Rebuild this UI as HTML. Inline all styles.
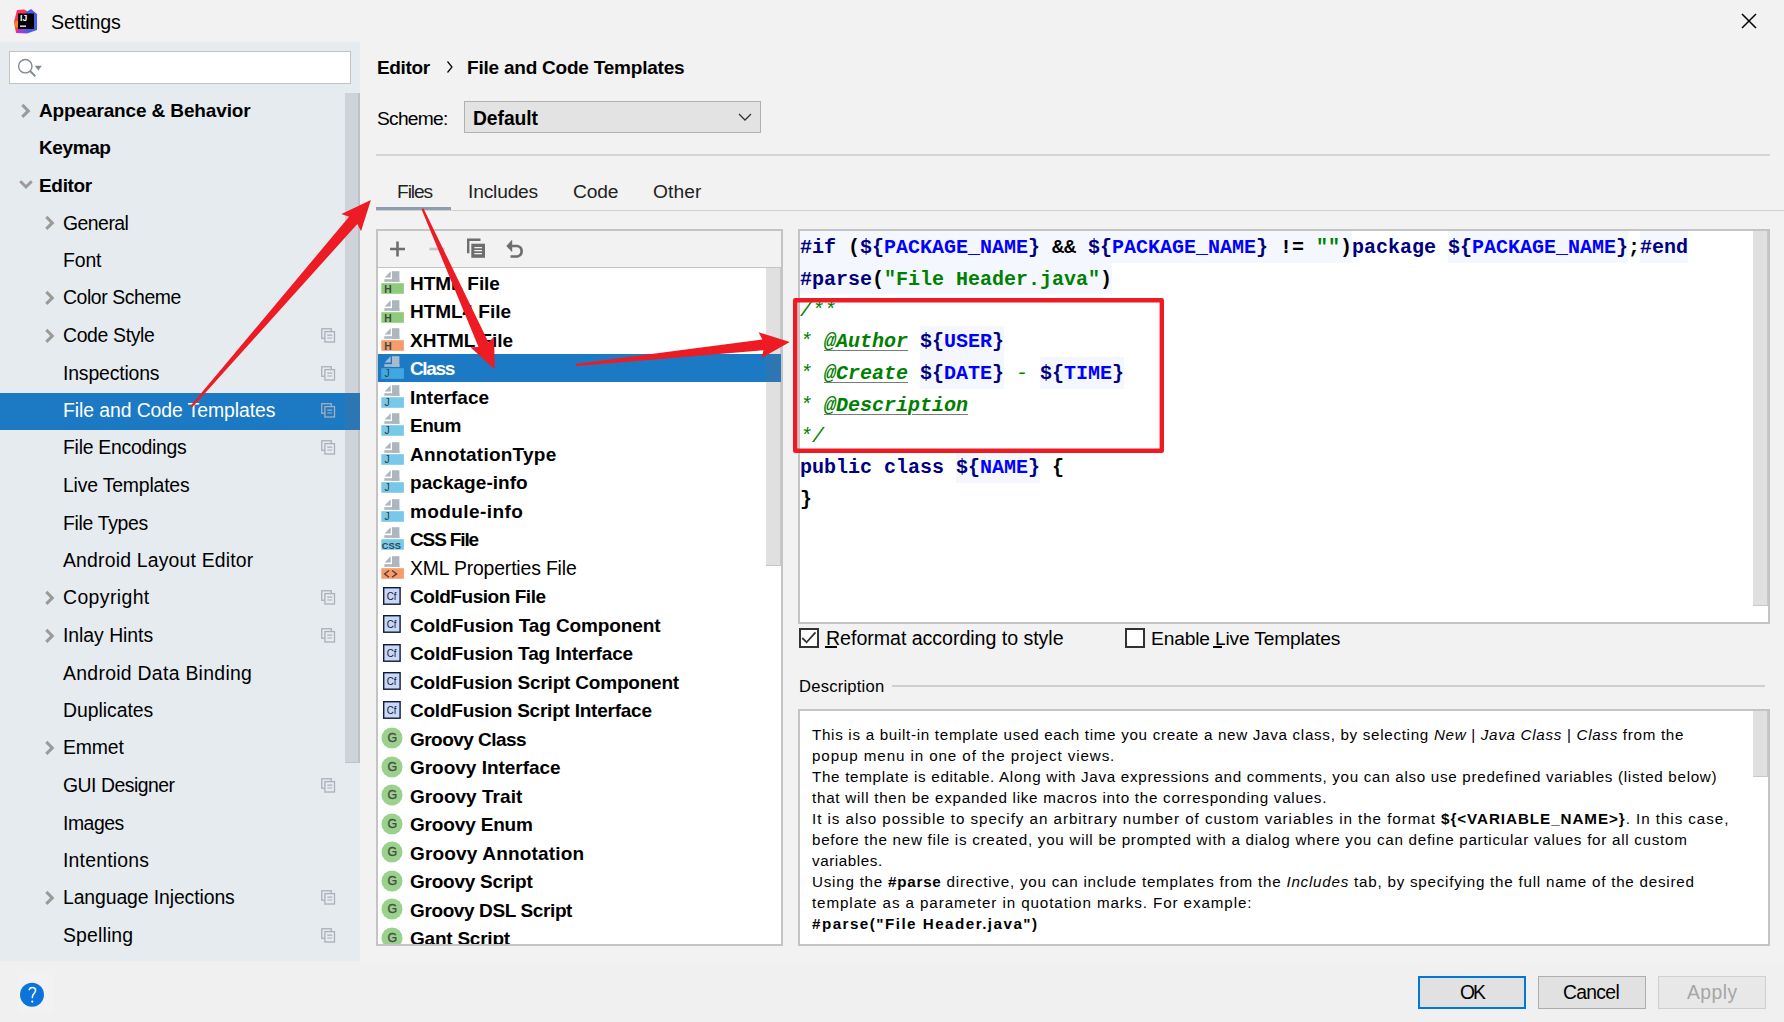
<!DOCTYPE html><html><head><meta charset="utf-8"><style>
*{margin:0;padding:0;box-sizing:border-box}
html,body{width:1784px;height:1022px;overflow:hidden;background:#F2F2F2;font-family:"Liberation Sans",sans-serif;color:#000}
.a{position:absolute;white-space:pre}
</style></head><body>
<svg class="a" style="left:14px;top:9px" width="24" height="25" viewBox="0 0 24 25">
<polygon points="3,1 10,0.5 15,3 9,21 2,24 0,13" fill="#FE3159"/>
<polygon points="0,13 5,11 7,17 2,19" fill="#FC801D"/>
<polygon points="17,0 23,5 23,21 13,24.5 6,19 11,4" fill="#4A5BE8"/>
<polygon points="2,24 7,17 13,24.5" fill="#A03BD8"/>
<rect x="4" y="4.5" width="16" height="15.5" fill="#000"/>
<text x="6" y="12.1" font-family="Liberation Sans" font-weight="bold" font-size="8.6" fill="#fff">IJ</text>
<rect x="6" y="16.5" width="6" height="1.3" fill="#fff"/>
</svg>
<div class="a" id="k1" style="left:51px;top:11.05px;font-size:19.6px;line-height:23.52px;;letter-spacing:-0.129px">Settings</div>
<svg class="a" style="left:1740px;top:12px" width="18" height="18" viewBox="0 0 18 18"><path d="M2 2L16 16M16 2L2 16" stroke="#000" stroke-width="1.5"/></svg>
<div class="a" style="left:0;top:961px;width:1784px;height:61px;background:#F0F0F0"></div>
<div class="a" style="left:0;top:42px;width:360px;height:919px;background:#E6EBF0"></div>
<div class="a" style="left:9px;top:51px;width:342px;height:33px;background:#fff;border:1.5px solid #C2C2C2"></div>
<svg class="a" style="left:16px;top:58px" width="30" height="20" viewBox="0 0 30 20">
<circle cx="9.3" cy="8.2" r="6.7" fill="none" stroke="#7F8B91" stroke-width="1.4"/>
<path d="M14 13L19.3 18.2" stroke="#7F8B91" stroke-width="1.9"/>
<path d="M18.8 7.8L25.8 7.8L22.3 12.6Z" fill="#7F8B91"/>
</svg>
<div class="a" style="left:345px;top:93px;width:15px;height:669.5px;background:#CED3D9;border-right:2.3px solid #BDC2C8;border-bottom:1.8px solid #BDC2C8"></div>
<div class="a" id="k2" style="left:39px;top:99.62px;font-size:19px;line-height:22.80px;font-weight:bold;color:#000;letter-spacing:-0.135px">Appearance &amp; Behavior</div>
<svg class="a" style="left:19.5px;top:102.5px" width="12" height="16" viewBox="0 0 12 16"><path d="M2.3 1.9L8.3 7.9L2.3 13.9" fill="none" stroke="#9A9A9A" stroke-width="3"/></svg>
<div class="a" id="k3" style="left:39px;top:136.62px;font-size:19px;line-height:22.80px;font-weight:bold;color:#000;letter-spacing:-0.396px">Keymap</div>
<div class="a" id="k4" style="left:39px;top:174.62px;font-size:19px;line-height:22.80px;font-weight:bold;color:#000;letter-spacing:-0.324px">Editor</div>
<svg class="a" style="left:18px;top:179.0px" width="16" height="12" viewBox="0 0 16 12"><path d="M2.3 2.3L8 8L13.7 2.3" fill="none" stroke="#9A9A9A" stroke-width="3"/></svg>
<div class="a" id="k5" style="left:63px;top:212.24px;font-size:19.4px;line-height:23.28px;color:#000;letter-spacing:-0.510px">General</div>
<svg class="a" style="left:43.5px;top:215.0px" width="12" height="16" viewBox="0 0 12 16"><path d="M2.3 1.9L8.3 7.9L2.3 13.9" fill="none" stroke="#9A9A9A" stroke-width="3"/></svg>
<div class="a" id="k6" style="left:63px;top:249.24px;font-size:19.4px;line-height:23.28px;color:#000;letter-spacing:-0.120px">Font</div>
<div class="a" id="k7" style="left:63px;top:286.24px;font-size:19.4px;line-height:23.28px;color:#000;letter-spacing:-0.409px">Color Scheme</div>
<svg class="a" style="left:43.5px;top:290.0px" width="12" height="16" viewBox="0 0 12 16"><path d="M2.3 1.9L8.3 7.9L2.3 13.9" fill="none" stroke="#9A9A9A" stroke-width="3"/></svg>
<div class="a" id="k8" style="left:63px;top:324.24px;font-size:19.4px;line-height:23.28px;color:#000;letter-spacing:-0.340px">Code Style</div>
<svg class="a" style="left:43.5px;top:327.5px" width="12" height="16" viewBox="0 0 12 16"><path d="M2.3 1.9L8.3 7.9L2.3 13.9" fill="none" stroke="#9A9A9A" stroke-width="3"/></svg>
<svg class="a" style="left:320.5px;top:328px" width="15" height="15" viewBox="0 0 15 15"><rect x="0.75" y="0.75" width="9.5" height="9.5" fill="none" stroke="#A8B0B8" stroke-width="1.3"/><rect x="3.9" y="3.6" width="9.6" height="10.4" fill="#E6EBF0" stroke="#A8B0B8" stroke-width="1.3"/><path d="M6.3 7.1H11.2M6.3 10H11.2" stroke="#A8B0B8" stroke-width="1.2"/></svg>
<div class="a" id="k9" style="left:63px;top:362.24px;font-size:19.4px;line-height:23.28px;color:#000;letter-spacing:-0.162px">Inspections</div>
<svg class="a" style="left:320.5px;top:366px" width="15" height="15" viewBox="0 0 15 15"><rect x="0.75" y="0.75" width="9.5" height="9.5" fill="none" stroke="#A8B0B8" stroke-width="1.3"/><rect x="3.9" y="3.6" width="9.6" height="10.4" fill="#E6EBF0" stroke="#A8B0B8" stroke-width="1.3"/><path d="M6.3 7.1H11.2M6.3 10H11.2" stroke="#A8B0B8" stroke-width="1.2"/></svg>
<div class="a" style="left:0;top:393px;width:345px;height:37px;background:#1C79C3"></div>
<div class="a" style="left:345px;top:393px;width:15px;height:37px;background:#2C76B4"></div>
<div class="a" id="k10" style="left:63px;top:399.24px;font-size:19.4px;line-height:23.28px;color:#fff;letter-spacing:-0.082px">File and Code Templates</div>
<svg class="a" style="left:320.5px;top:403px" width="15" height="15" viewBox="0 0 15 15"><rect x="0.75" y="0.75" width="9.5" height="9.5" fill="none" stroke="#A8B0B8" stroke-width="1.3"/><rect x="3.9" y="3.6" width="9.6" height="10.4" fill="#1C79C3" stroke="#A8B0B8" stroke-width="1.3"/><path d="M6.3 7.1H11.2M6.3 10H11.2" stroke="#A8B0B8" stroke-width="1.2"/></svg>
<div class="a" id="k11" style="left:63px;top:436.24px;font-size:19.4px;line-height:23.28px;color:#000;letter-spacing:-0.263px">File Encodings</div>
<svg class="a" style="left:320.5px;top:440px" width="15" height="15" viewBox="0 0 15 15"><rect x="0.75" y="0.75" width="9.5" height="9.5" fill="none" stroke="#A8B0B8" stroke-width="1.3"/><rect x="3.9" y="3.6" width="9.6" height="10.4" fill="#E6EBF0" stroke="#A8B0B8" stroke-width="1.3"/><path d="M6.3 7.1H11.2M6.3 10H11.2" stroke="#A8B0B8" stroke-width="1.2"/></svg>
<div class="a" id="k12" style="left:63px;top:474.24px;font-size:19.4px;line-height:23.28px;color:#000;letter-spacing:-0.180px">Live Templates</div>
<div class="a" id="k13" style="left:63px;top:512.24px;font-size:19.4px;line-height:23.28px;color:#000;letter-spacing:-0.320px">File Types</div>
<div class="a" id="k14" style="left:63px;top:549.24px;font-size:19.4px;line-height:23.28px;color:#000;letter-spacing:0.189px">Android Layout Editor</div>
<div class="a" id="k15" style="left:63px;top:586.24px;font-size:19.4px;line-height:23.28px;color:#000;letter-spacing:0.405px">Copyright</div>
<svg class="a" style="left:43.5px;top:590.0px" width="12" height="16" viewBox="0 0 12 16"><path d="M2.3 1.9L8.3 7.9L2.3 13.9" fill="none" stroke="#9A9A9A" stroke-width="3"/></svg>
<svg class="a" style="left:320.5px;top:590px" width="15" height="15" viewBox="0 0 15 15"><rect x="0.75" y="0.75" width="9.5" height="9.5" fill="none" stroke="#A8B0B8" stroke-width="1.3"/><rect x="3.9" y="3.6" width="9.6" height="10.4" fill="#E6EBF0" stroke="#A8B0B8" stroke-width="1.3"/><path d="M6.3 7.1H11.2M6.3 10H11.2" stroke="#A8B0B8" stroke-width="1.2"/></svg>
<div class="a" id="k16" style="left:63px;top:624.24px;font-size:19.4px;line-height:23.28px;color:#000;letter-spacing:-0.036px">Inlay Hints</div>
<svg class="a" style="left:43.5px;top:627.5px" width="12" height="16" viewBox="0 0 12 16"><path d="M2.3 1.9L8.3 7.9L2.3 13.9" fill="none" stroke="#9A9A9A" stroke-width="3"/></svg>
<svg class="a" style="left:320.5px;top:628px" width="15" height="15" viewBox="0 0 15 15"><rect x="0.75" y="0.75" width="9.5" height="9.5" fill="none" stroke="#A8B0B8" stroke-width="1.3"/><rect x="3.9" y="3.6" width="9.6" height="10.4" fill="#E6EBF0" stroke="#A8B0B8" stroke-width="1.3"/><path d="M6.3 7.1H11.2M6.3 10H11.2" stroke="#A8B0B8" stroke-width="1.2"/></svg>
<div class="a" id="k17" style="left:63px;top:662.24px;font-size:19.4px;line-height:23.28px;color:#000;letter-spacing:0.294px">Android Data Binding</div>
<div class="a" id="k18" style="left:63px;top:699.24px;font-size:19.4px;line-height:23.28px;color:#000;letter-spacing:-0.040px">Duplicates</div>
<div class="a" id="k19" style="left:63px;top:736.24px;font-size:19.4px;line-height:23.28px;color:#000;letter-spacing:-0.135px">Emmet</div>
<svg class="a" style="left:43.5px;top:740.0px" width="12" height="16" viewBox="0 0 12 16"><path d="M2.3 1.9L8.3 7.9L2.3 13.9" fill="none" stroke="#9A9A9A" stroke-width="3"/></svg>
<div class="a" id="k20" style="left:63px;top:774.24px;font-size:19.4px;line-height:23.28px;color:#000;letter-spacing:-0.491px">GUI Designer</div>
<svg class="a" style="left:320.5px;top:778px" width="15" height="15" viewBox="0 0 15 15"><rect x="0.75" y="0.75" width="9.5" height="9.5" fill="none" stroke="#A8B0B8" stroke-width="1.3"/><rect x="3.9" y="3.6" width="9.6" height="10.4" fill="#E6EBF0" stroke="#A8B0B8" stroke-width="1.3"/><path d="M6.3 7.1H11.2M6.3 10H11.2" stroke="#A8B0B8" stroke-width="1.2"/></svg>
<div class="a" id="k21" style="left:63px;top:812.24px;font-size:19.4px;line-height:23.28px;color:#000;letter-spacing:-0.468px">Images</div>
<div class="a" id="k22" style="left:63px;top:849.24px;font-size:19.4px;line-height:23.28px;color:#000;letter-spacing:0.200px">Intentions</div>
<div class="a" id="k23" style="left:63px;top:886.24px;font-size:19.4px;line-height:23.28px;color:#000;letter-spacing:-0.100px">Language Injections</div>
<svg class="a" style="left:43.5px;top:890.0px" width="12" height="16" viewBox="0 0 12 16"><path d="M2.3 1.9L8.3 7.9L2.3 13.9" fill="none" stroke="#9A9A9A" stroke-width="3"/></svg>
<svg class="a" style="left:320.5px;top:890px" width="15" height="15" viewBox="0 0 15 15"><rect x="0.75" y="0.75" width="9.5" height="9.5" fill="none" stroke="#A8B0B8" stroke-width="1.3"/><rect x="3.9" y="3.6" width="9.6" height="10.4" fill="#E6EBF0" stroke="#A8B0B8" stroke-width="1.3"/><path d="M6.3 7.1H11.2M6.3 10H11.2" stroke="#A8B0B8" stroke-width="1.2"/></svg>
<div class="a" id="k24" style="left:63px;top:924.24px;font-size:19.4px;line-height:23.28px;color:#000;letter-spacing:0.154px">Spelling</div>
<svg class="a" style="left:320.5px;top:928px" width="15" height="15" viewBox="0 0 15 15"><rect x="0.75" y="0.75" width="9.5" height="9.5" fill="none" stroke="#A8B0B8" stroke-width="1.3"/><rect x="3.9" y="3.6" width="9.6" height="10.4" fill="#E6EBF0" stroke="#A8B0B8" stroke-width="1.3"/><path d="M6.3 7.1H11.2M6.3 10H11.2" stroke="#A8B0B8" stroke-width="1.2"/></svg>
<div class="a" id="k25" style="left:377px;top:56.62px;font-size:19px;line-height:22.80px;font-weight:bold;letter-spacing:-0.360px">Editor</div>
<svg class="a" style="left:446px;top:60px" width="8" height="14" viewBox="0 0 8 14"><path d="M1.5 1.5L6 7L1.5 12.5" fill="none" stroke="#000" stroke-width="1.2"/></svg>
<div class="a" id="k26" style="left:467px;top:56.62px;font-size:19px;line-height:22.80px;font-weight:bold;letter-spacing:-0.221px">File and Code Templates</div>
<div class="a" id="k27" style="left:377px;top:107.43px;font-size:19.2px;line-height:23.04px;;letter-spacing:-0.750px">Scheme:</div>
<div class="a" style="left:463.5px;top:100.8px;width:297px;height:32.2px;background:#E3E3E3;border:1.5px solid #B0B0B0"></div>
<div class="a" id="k28" style="left:473px;top:107.33px;font-size:19.3px;line-height:23.16px;font-weight:bold;letter-spacing:-0.060px">Default</div>
<svg class="a" style="left:737px;top:111px" width="16" height="12" viewBox="0 0 16 12"><path d="M2 3L8 9L14 3" fill="none" stroke="#333" stroke-width="1.3"/></svg>
<div class="a" style="left:376px;top:154px;width:1394px;height:2px;background:#D5D5D5"></div>
<div class="a" id="k29" style="left:397px;top:180.43px;font-size:19.2px;line-height:23.04px;color:#222;letter-spacing:-1.080px">Files</div>
<div class="a" id="k30" style="left:468px;top:180.43px;font-size:19.2px;line-height:23.04px;color:#222;letter-spacing:-0.180px">Includes</div>
<div class="a" id="k31" style="left:573px;top:180.43px;font-size:19.2px;line-height:23.04px;color:#222;letter-spacing:-0.180px">Code</div>
<div class="a" id="k32" style="left:653px;top:180.43px;font-size:19.2px;line-height:23.04px;color:#222;letter-spacing:0.090px">Other</div>
<div class="a" style="left:376px;top:210px;width:1408px;height:1px;background:#D0D0D0"></div>
<div class="a" style="left:376px;top:207px;width:75px;height:3px;background:#8E9CB0"></div>
<div class="a" style="left:376px;top:229px;width:407px;height:717px;border:2px solid #C4C4C4;background:#fff"></div>
<div class="a" style="left:378px;top:231px;width:403px;height:37px;background:#F2F2F2;border-bottom:1.5px solid #C4C4C4"></div>
<svg class="a" style="left:388px;top:238px" width="140" height="22" viewBox="0 0 140 22">
<path d="M2 11H17M9.5 3.5V18.5" stroke="#6E6E6E" stroke-width="2.6"/>
<path d="M41.5 11H56.5" stroke="#C4C4C4" stroke-width="2.6"/>
<path d="M80.2 15.3V1.8H92.5" fill="none" stroke="#6E6E6E" stroke-width="2.4"/>
<rect x="83.3" y="5.7" width="13.7" height="14.1" fill="#6E6E6E"/>
<path d="M86.3 9.6H94M86.3 12.6H94M86.3 15.6H94" stroke="#F2F2F2" stroke-width="1.4"/>
<path d="M123 8H129.5A5.4 5.4 0 0 1 129.5 18.5H122.5" fill="none" stroke="#6E6E6E" stroke-width="2.7"/>
<path d="M118.3 8L124.2 1.5V14.3Z" fill="#6E6E6E"/>
</svg>
<div class="a" style="left:766px;top:268px;width:15px;height:297.5px;background:#E0E0E0;border-right:1.6px solid #C8C8C8;border-bottom:1.6px solid #C8C8C8"></div>
<div class="a" style="left:378px;top:354px;width:388px;height:28px;background:#1C79C3"></div>
<div class="a" style="left:766px;top:354px;width:15px;height:28px;background:#2C76B4"></div>
<div class="a" style="left:378px;top:268px;width:388px;height:676px;overflow:hidden">
<div class="a" id="k33" style="left:32px;top:4.62px;font-size:19px;line-height:22.80px;font-weight:bold;color:#000;letter-spacing:-0.067px">HTML File</div>
<svg class="a" style="left:3px;top:3.0px" width="24" height="24" viewBox="0 0 24 24"><path d="M3.6 6.5L9.7 0.2V6.5Z" fill="#ADB6BE"/><rect x="11" y="0.2" width="7.4" height="10.6" fill="#ADB6BE"/><rect x="3.3" y="8.2" width="15.1" height="2.6" fill="#ADB6BE"/><rect x="0.3" y="12.2" width="22.6" height="10.6" fill="#8FCB7B"/><text x="3.2" y="21.6" font-family="Liberation Sans" font-weight="bold" font-size="10.3" fill="#3A4A3C">H</text></svg>
<div class="a" id="k34" style="left:32px;top:32.62px;font-size:19px;line-height:22.80px;font-weight:bold;color:#000;letter-spacing:-0.040px">HTML4 File</div>
<svg class="a" style="left:3px;top:31.5px" width="24" height="24" viewBox="0 0 24 24"><path d="M3.6 6.5L9.7 0.2V6.5Z" fill="#ADB6BE"/><rect x="11" y="0.2" width="7.4" height="10.6" fill="#ADB6BE"/><rect x="3.3" y="8.2" width="15.1" height="2.6" fill="#ADB6BE"/><rect x="0.3" y="12.2" width="22.6" height="10.6" fill="#8FCB7B"/><text x="3.2" y="21.6" font-family="Liberation Sans" font-weight="bold" font-size="10.3" fill="#3A4A3C">H</text></svg>
<div class="a" id="k35" style="left:32px;top:61.62px;font-size:19px;line-height:22.80px;font-weight:bold;color:#000;letter-spacing:0.000px">XHTML File</div>
<svg class="a" style="left:3px;top:60.0px" width="24" height="24" viewBox="0 0 24 24"><path d="M3.6 6.5L9.7 0.2V6.5Z" fill="#ADB6BE"/><rect x="11" y="0.2" width="7.4" height="10.6" fill="#ADB6BE"/><rect x="3.3" y="8.2" width="15.1" height="2.6" fill="#ADB6BE"/><rect x="0.3" y="12.2" width="22.6" height="10.6" fill="#F59B6C"/><text x="3.2" y="21.6" font-family="Liberation Sans" font-weight="bold" font-size="10.3" fill="#3A4A3C">H</text></svg>
<div class="a" id="k36" style="left:32px;top:89.62px;font-size:19px;line-height:22.80px;font-weight:bold;color:#fff;letter-spacing:-1.350px">Class</div>
<svg class="a" style="left:3px;top:88.4px" width="24" height="24" viewBox="0 0 24 24"><path d="M3.6 6.5L9.7 0.2V6.5Z" fill="#A9BCCE"/><rect x="11" y="0.2" width="7.4" height="10.6" fill="#A9BCCE"/><rect x="3.3" y="8.2" width="15.1" height="2.6" fill="#A9BCCE"/><rect x="0.3" y="12.2" width="22.6" height="10.6" fill="#40A8E0"/><text x="3.4" y="21.4" font-family="Liberation Sans" font-size="10.5" fill="#2F3A40">J</text></svg>
<div class="a" id="k37" style="left:32px;top:118.62px;font-size:19px;line-height:22.80px;font-weight:bold;color:#000;letter-spacing:-0.022px">Interface</div>
<svg class="a" style="left:3px;top:116.9px" width="24" height="24" viewBox="0 0 24 24"><path d="M3.6 6.5L9.7 0.2V6.5Z" fill="#ADB6BE"/><rect x="11" y="0.2" width="7.4" height="10.6" fill="#ADB6BE"/><rect x="3.3" y="8.2" width="15.1" height="2.6" fill="#ADB6BE"/><rect x="0.3" y="12.2" width="22.6" height="10.6" fill="#78C8E8"/><text x="3.4" y="21.4" font-family="Liberation Sans" font-size="10.5" fill="#2F3A40">J</text></svg>
<div class="a" id="k38" style="left:32px;top:146.62px;font-size:19px;line-height:22.80px;font-weight:bold;color:#000;letter-spacing:-0.480px">Enum</div>
<svg class="a" style="left:3px;top:145.4px" width="24" height="24" viewBox="0 0 24 24"><path d="M3.6 6.5L9.7 0.2V6.5Z" fill="#ADB6BE"/><rect x="11" y="0.2" width="7.4" height="10.6" fill="#ADB6BE"/><rect x="3.3" y="8.2" width="15.1" height="2.6" fill="#ADB6BE"/><rect x="0.3" y="12.2" width="22.6" height="10.6" fill="#78C8E8"/><text x="3.4" y="21.4" font-family="Liberation Sans" font-size="10.5" fill="#2F3A40">J</text></svg>
<div class="a" id="k39" style="left:32px;top:175.62px;font-size:19px;line-height:22.80px;font-weight:bold;color:#000;letter-spacing:0.235px">AnnotationType</div>
<svg class="a" style="left:3px;top:173.9px" width="24" height="24" viewBox="0 0 24 24"><path d="M3.6 6.5L9.7 0.2V6.5Z" fill="#ADB6BE"/><rect x="11" y="0.2" width="7.4" height="10.6" fill="#ADB6BE"/><rect x="3.3" y="8.2" width="15.1" height="2.6" fill="#ADB6BE"/><rect x="0.3" y="12.2" width="22.6" height="10.6" fill="#78C8E8"/><text x="3.4" y="21.4" font-family="Liberation Sans" font-size="10.5" fill="#2F3A40">J</text></svg>
<div class="a" id="k40" style="left:32px;top:203.62px;font-size:19px;line-height:22.80px;font-weight:bold;color:#000;letter-spacing:0.049px">package-info</div>
<svg class="a" style="left:3px;top:202.4px" width="24" height="24" viewBox="0 0 24 24"><path d="M3.6 6.5L9.7 0.2V6.5Z" fill="#ADB6BE"/><rect x="11" y="0.2" width="7.4" height="10.6" fill="#ADB6BE"/><rect x="3.3" y="8.2" width="15.1" height="2.6" fill="#ADB6BE"/><rect x="0.3" y="12.2" width="22.6" height="10.6" fill="#78C8E8"/><text x="3.4" y="21.4" font-family="Liberation Sans" font-size="10.5" fill="#2F3A40">J</text></svg>
<div class="a" id="k41" style="left:32px;top:232.62px;font-size:19px;line-height:22.80px;font-weight:bold;color:#000;letter-spacing:0.414px">module-info</div>
<svg class="a" style="left:3px;top:230.8px" width="24" height="24" viewBox="0 0 24 24"><path d="M3.6 6.5L9.7 0.2V6.5Z" fill="#ADB6BE"/><rect x="11" y="0.2" width="7.4" height="10.6" fill="#ADB6BE"/><rect x="3.3" y="8.2" width="15.1" height="2.6" fill="#ADB6BE"/><rect x="0.3" y="12.2" width="22.6" height="10.6" fill="#78C8E8"/><text x="3.4" y="21.4" font-family="Liberation Sans" font-size="10.5" fill="#2F3A40">J</text></svg>
<div class="a" id="k42" style="left:32px;top:260.62px;font-size:19px;line-height:22.80px;font-weight:bold;color:#000;letter-spacing:-1.131px">CSS File</div>
<svg class="a" style="left:3px;top:259.3px" width="24" height="24" viewBox="0 0 24 24"><path d="M3.6 6.5L9.7 0.2V6.5Z" fill="#ADB6BE"/><rect x="11" y="0.2" width="7.4" height="10.6" fill="#ADB6BE"/><rect x="3.3" y="8.2" width="15.1" height="2.6" fill="#ADB6BE"/><rect x="0.3" y="12.2" width="22.6" height="10.6" fill="#78C8E8"/><text x="0.8" y="21.8" font-family="Liberation Sans" font-weight="bold" font-size="9.3" fill="#2D4552">CSS</text></svg>
<div class="a" id="k43" style="left:32px;top:289.24px;font-size:19.4px;line-height:23.28px;color:#000;letter-spacing:-0.160px">XML Properties File</div>
<svg class="a" style="left:3px;top:287.8px" width="24" height="24" viewBox="0 0 24 24"><path d="M3.6 6.5L9.7 0.2V6.5Z" fill="#ADB6BE"/><rect x="11" y="0.2" width="7.4" height="10.6" fill="#ADB6BE"/><rect x="3.3" y="8.2" width="15.1" height="2.6" fill="#ADB6BE"/><rect x="0.3" y="12.2" width="22.6" height="10.6" fill="#F59B6C"/><path d="M8 14.5L3.6 17.9L8 21.3M11.1 14.5L15.6 17.9L11.1 21.3" fill="none" stroke="#5A3A2C" stroke-width="1.35"/></svg>
<div class="a" id="k44" style="left:32px;top:317.62px;font-size:19px;line-height:22.80px;font-weight:bold;color:#000;letter-spacing:-0.463px">ColdFusion File</div>
<svg class="a" style="left:5px;top:318.8px" width="19" height="19" viewBox="0 0 19 19"><rect x="0.7" y="0.7" width="16.4" height="16.5" fill="#C9D8F7" stroke="#0F1A3A" stroke-width="1.4"/><text x="3.7" y="13.4" font-family="Liberation Sans" font-size="11.8" fill="#1A2040" textLength="9.8" lengthAdjust="spacingAndGlyphs">Cf</text></svg>
<div class="a" id="k45" style="left:32px;top:346.62px;font-size:19px;line-height:22.80px;font-weight:bold;color:#000;letter-spacing:-0.102px">ColdFusion Tag Component</div>
<svg class="a" style="left:5px;top:347.3px" width="19" height="19" viewBox="0 0 19 19"><rect x="0.7" y="0.7" width="16.4" height="16.5" fill="#C9D8F7" stroke="#0F1A3A" stroke-width="1.4"/><text x="3.7" y="13.4" font-family="Liberation Sans" font-size="11.8" fill="#1A2040" textLength="9.8" lengthAdjust="spacingAndGlyphs">Cf</text></svg>
<div class="a" id="k46" style="left:32px;top:374.62px;font-size:19px;line-height:22.80px;font-weight:bold;color:#000;letter-spacing:-0.149px">ColdFusion Tag Interface</div>
<svg class="a" style="left:5px;top:375.7px" width="19" height="19" viewBox="0 0 19 19"><rect x="0.7" y="0.7" width="16.4" height="16.5" fill="#C9D8F7" stroke="#0F1A3A" stroke-width="1.4"/><text x="3.7" y="13.4" font-family="Liberation Sans" font-size="11.8" fill="#1A2040" textLength="9.8" lengthAdjust="spacingAndGlyphs">Cf</text></svg>
<div class="a" id="k47" style="left:32px;top:403.62px;font-size:19px;line-height:22.80px;font-weight:bold;color:#000;letter-spacing:-0.201px">ColdFusion Script Component</div>
<svg class="a" style="left:5px;top:404.2px" width="19" height="19" viewBox="0 0 19 19"><rect x="0.7" y="0.7" width="16.4" height="16.5" fill="#C9D8F7" stroke="#0F1A3A" stroke-width="1.4"/><text x="3.7" y="13.4" font-family="Liberation Sans" font-size="11.8" fill="#1A2040" textLength="9.8" lengthAdjust="spacingAndGlyphs">Cf</text></svg>
<div class="a" id="k48" style="left:32px;top:431.62px;font-size:19px;line-height:22.80px;font-weight:bold;color:#000;letter-spacing:-0.235px">ColdFusion Script Interface</div>
<svg class="a" style="left:5px;top:432.7px" width="19" height="19" viewBox="0 0 19 19"><rect x="0.7" y="0.7" width="16.4" height="16.5" fill="#C9D8F7" stroke="#0F1A3A" stroke-width="1.4"/><text x="3.7" y="13.4" font-family="Liberation Sans" font-size="11.8" fill="#1A2040" textLength="9.8" lengthAdjust="spacingAndGlyphs">Cf</text></svg>
<div class="a" id="k49" style="left:32px;top:460.62px;font-size:19px;line-height:22.80px;font-weight:bold;color:#000;letter-spacing:-0.540px">Groovy Class</div>
<svg class="a" style="left:3px;top:459.2px" width="22" height="22" viewBox="0 0 22 22"><circle cx="11" cy="11" r="10.5" fill="#9AD18C"/><text x="6.5" y="15.4" font-family="Liberation Sans" font-size="12.4" fill="#454B45" stroke="#454B45" stroke-width="0.35">G</text></svg>
<div class="a" id="k50" style="left:32px;top:488.62px;font-size:19px;line-height:22.80px;font-weight:bold;color:#000;letter-spacing:-0.024px">Groovy Interface</div>
<svg class="a" style="left:3px;top:487.7px" width="22" height="22" viewBox="0 0 22 22"><circle cx="11" cy="11" r="10.5" fill="#9AD18C"/><text x="6.5" y="15.4" font-family="Liberation Sans" font-size="12.4" fill="#454B45" stroke="#454B45" stroke-width="0.35">G</text></svg>
<div class="a" id="k51" style="left:32px;top:517.62px;font-size:19px;line-height:22.80px;font-weight:bold;color:#000;letter-spacing:0.033px">Groovy Trait</div>
<svg class="a" style="left:3px;top:516.1px" width="22" height="22" viewBox="0 0 22 22"><circle cx="11" cy="11" r="10.5" fill="#9AD18C"/><text x="6.5" y="15.4" font-family="Liberation Sans" font-size="12.4" fill="#454B45" stroke="#454B45" stroke-width="0.35">G</text></svg>
<div class="a" id="k52" style="left:32px;top:545.62px;font-size:19px;line-height:22.80px;font-weight:bold;color:#000;letter-spacing:-0.162px">Groovy Enum</div>
<svg class="a" style="left:3px;top:544.6px" width="22" height="22" viewBox="0 0 22 22"><circle cx="11" cy="11" r="10.5" fill="#9AD18C"/><text x="6.5" y="15.4" font-family="Liberation Sans" font-size="12.4" fill="#454B45" stroke="#454B45" stroke-width="0.35">G</text></svg>
<div class="a" id="k53" style="left:32px;top:574.62px;font-size:19px;line-height:22.80px;font-weight:bold;color:#000;letter-spacing:0.169px">Groovy Annotation</div>
<svg class="a" style="left:3px;top:573.1px" width="22" height="22" viewBox="0 0 22 22"><circle cx="11" cy="11" r="10.5" fill="#9AD18C"/><text x="6.5" y="15.4" font-family="Liberation Sans" font-size="12.4" fill="#454B45" stroke="#454B45" stroke-width="0.35">G</text></svg>
<div class="a" id="k54" style="left:32px;top:602.62px;font-size:19px;line-height:22.80px;font-weight:bold;color:#000;letter-spacing:-0.240px">Groovy Script</div>
<svg class="a" style="left:3px;top:601.6px" width="22" height="22" viewBox="0 0 22 22"><circle cx="11" cy="11" r="10.5" fill="#9AD18C"/><text x="6.5" y="15.4" font-family="Liberation Sans" font-size="12.4" fill="#454B45" stroke="#454B45" stroke-width="0.35">G</text></svg>
<div class="a" id="k55" style="left:32px;top:631.62px;font-size:19px;line-height:22.80px;font-weight:bold;color:#000;letter-spacing:-0.383px">Groovy DSL Script</div>
<svg class="a" style="left:3px;top:630.1px" width="22" height="22" viewBox="0 0 22 22"><circle cx="11" cy="11" r="10.5" fill="#9AD18C"/><text x="6.5" y="15.4" font-family="Liberation Sans" font-size="12.4" fill="#454B45" stroke="#454B45" stroke-width="0.35">G</text></svg>
<div class="a" id="k56" style="left:32px;top:659.62px;font-size:19px;line-height:22.80px;font-weight:bold;color:#000;letter-spacing:-0.230px">Gant Script</div>
<svg class="a" style="left:3px;top:658.5px" width="22" height="22" viewBox="0 0 22 22"><circle cx="11" cy="11" r="10.5" fill="#9AD18C"/><text x="6.5" y="15.4" font-family="Liberation Sans" font-size="12.4" fill="#454B45" stroke="#454B45" stroke-width="0.35">G</text></svg>
</div>
<div class="a" style="left:798px;top:229px;width:972px;height:395px;border:2px solid #C4C4C4;background:#fff"></div>
<div class="a" style="left:1753px;top:231px;width:15px;height:374.5px;background:#E0E0E0;border-right:1.6px solid #C8C8C8;border-bottom:1.6px solid #C8C8C8"></div>
<div class="a" style="left:800.0px;top:231.0px;width:36.0px;height:31.5px;background:#F4F7FD"></div>
<div class="a" style="left:836.0px;top:231.0px;width:24.0px;height:31.5px;background:#F4F7FD"></div>
<div class="a" style="left:860.0px;top:231.0px;width:24.0px;height:31.5px;background:#F4F7FD"></div>
<div class="a" style="left:884.0px;top:231.0px;width:144.0px;height:31.5px;background:#F4F7FD"></div>
<div class="a" style="left:1028.0px;top:231.0px;width:12.0px;height:31.5px;background:#F4F7FD"></div>
<div class="a" style="left:1040.0px;top:231.0px;width:48.0px;height:31.5px;background:#F4F7FD"></div>
<div class="a" style="left:1088.0px;top:231.0px;width:24.0px;height:31.5px;background:#F4F7FD"></div>
<div class="a" style="left:1112.0px;top:231.0px;width:144.0px;height:31.5px;background:#F4F7FD"></div>
<div class="a" style="left:1256.0px;top:231.0px;width:12.0px;height:31.5px;background:#F4F7FD"></div>
<div class="a" style="left:1268.0px;top:231.0px;width:48.0px;height:31.5px;background:#F4F7FD"></div>
<div class="a" style="left:1316.0px;top:231.0px;width:24.0px;height:31.5px;background:#F4F7FD"></div>
<div class="a" style="left:1340.0px;top:231.0px;width:12.0px;height:31.5px;background:#F4F7FD"></div>
<div class="a" style="left:1448.0px;top:231.0px;width:24.0px;height:31.5px;background:#F4F7FD"></div>
<div class="a" style="left:1472.0px;top:231.0px;width:144.0px;height:31.5px;background:#F4F7FD"></div>
<div class="a" style="left:1616.0px;top:231.0px;width:12.0px;height:31.5px;background:#F4F7FD"></div>
<div class="a" style="left:1640.0px;top:231.0px;width:48.0px;height:31.5px;background:#F4F7FD"></div>
<div class="a" style="left:800px;top:235.67px;font-size:20px;line-height:24.00px;font-family:'Liberation Mono',monospace;color:#000080;font-weight:bold;">#if</div>
<div class="a" style="left:836.0px;top:235.67px;font-size:20px;line-height:24.00px;font-family:'Liberation Mono',monospace;color:#000;font-weight:bold;"> (</div>
<div class="a" style="left:860.0px;top:235.67px;font-size:20px;line-height:24.00px;font-family:'Liberation Mono',monospace;color:#000080;font-weight:bold;">${</div>
<div class="a" style="left:884.0px;top:235.67px;font-size:20px;line-height:24.00px;font-family:'Liberation Mono',monospace;color:#0000FF;font-weight:bold;">PACKAGE_NAME</div>
<div class="a" style="left:1028.0px;top:235.67px;font-size:20px;line-height:24.00px;font-family:'Liberation Mono',monospace;color:#000080;font-weight:bold;">}</div>
<div class="a" style="left:1040.0px;top:235.67px;font-size:20px;line-height:24.00px;font-family:'Liberation Mono',monospace;color:#000;font-weight:bold;"> &amp;&amp; </div>
<div class="a" style="left:1088.0px;top:235.67px;font-size:20px;line-height:24.00px;font-family:'Liberation Mono',monospace;color:#000080;font-weight:bold;">${</div>
<div class="a" style="left:1112.0px;top:235.67px;font-size:20px;line-height:24.00px;font-family:'Liberation Mono',monospace;color:#0000FF;font-weight:bold;">PACKAGE_NAME</div>
<div class="a" style="left:1256.0px;top:235.67px;font-size:20px;line-height:24.00px;font-family:'Liberation Mono',monospace;color:#000080;font-weight:bold;">}</div>
<div class="a" style="left:1268.0px;top:235.67px;font-size:20px;line-height:24.00px;font-family:'Liberation Mono',monospace;color:#000;font-weight:bold;"> != </div>
<div class="a" style="left:1316.0px;top:235.67px;font-size:20px;line-height:24.00px;font-family:'Liberation Mono',monospace;color:#008000;font-weight:bold;">&quot;&quot;</div>
<div class="a" style="left:1340.0px;top:235.67px;font-size:20px;line-height:24.00px;font-family:'Liberation Mono',monospace;color:#000;font-weight:bold;">)</div>
<div class="a" style="left:1352.0px;top:235.67px;font-size:20px;line-height:24.00px;font-family:'Liberation Mono',monospace;color:#000080;font-weight:bold;">package </div>
<div class="a" style="left:1448.0px;top:235.67px;font-size:20px;line-height:24.00px;font-family:'Liberation Mono',monospace;color:#000080;font-weight:bold;">${</div>
<div class="a" style="left:1472.0px;top:235.67px;font-size:20px;line-height:24.00px;font-family:'Liberation Mono',monospace;color:#0000FF;font-weight:bold;">PACKAGE_NAME</div>
<div class="a" style="left:1616.0px;top:235.67px;font-size:20px;line-height:24.00px;font-family:'Liberation Mono',monospace;color:#000080;font-weight:bold;">}</div>
<div class="a" style="left:1628.0px;top:235.67px;font-size:20px;line-height:24.00px;font-family:'Liberation Mono',monospace;color:#000;font-weight:bold;">;</div>
<div class="a" style="left:1640.0px;top:235.67px;font-size:20px;line-height:24.00px;font-family:'Liberation Mono',monospace;color:#000080;font-weight:bold;">#end</div>
<div class="a" style="left:800.0px;top:262.5px;width:72.0px;height:31.5px;background:#F4F7FD"></div>
<div class="a" style="left:872.0px;top:262.5px;width:12.0px;height:31.5px;background:#F4F7FD"></div>
<div class="a" style="left:884.0px;top:262.5px;width:216.0px;height:31.5px;background:#F4F7FD"></div>
<div class="a" style="left:1100.0px;top:262.5px;width:12.0px;height:31.5px;background:#F4F7FD"></div>
<div class="a" style="left:800px;top:267.67px;font-size:20px;line-height:24.00px;font-family:'Liberation Mono',monospace;color:#000080;font-weight:bold;">#parse</div>
<div class="a" style="left:872.0px;top:267.67px;font-size:20px;line-height:24.00px;font-family:'Liberation Mono',monospace;color:#000;font-weight:bold;">(</div>
<div class="a" style="left:884.0px;top:267.67px;font-size:20px;line-height:24.00px;font-family:'Liberation Mono',monospace;color:#008000;font-weight:bold;">&quot;File Header.java&quot;</div>
<div class="a" style="left:1100.0px;top:267.67px;font-size:20px;line-height:24.00px;font-family:'Liberation Mono',monospace;color:#000;font-weight:bold;">)</div>
<div class="a" style="left:800px;top:298.67px;font-size:20px;line-height:24.00px;font-family:'Liberation Mono',monospace;color:#008000;font-style:italic;">/**</div>
<div class="a" style="left:920.0px;top:325.5px;width:24.0px;height:31.5px;background:#F4F7FD"></div>
<div class="a" style="left:944.0px;top:325.5px;width:48.0px;height:31.5px;background:#F4F7FD"></div>
<div class="a" style="left:992.0px;top:325.5px;width:12.0px;height:31.5px;background:#F4F7FD"></div>
<div class="a" style="left:800px;top:329.67px;font-size:20px;line-height:24.00px;font-family:'Liberation Mono',monospace;color:#008000;font-style:italic;">* </div>
<div class="a" style="left:824.0px;top:329.67px;font-size:20px;line-height:24.00px;font-family:'Liberation Mono',monospace;color:#008000;font-weight:bold;font-style:italic;text-decoration:underline;text-decoration-color:#7a7a7a;text-decoration-thickness:1px;text-underline-offset:3px;">@Author</div>
<div class="a" style="left:908.0px;top:329.67px;font-size:20px;line-height:24.00px;font-family:'Liberation Mono',monospace;color:#008000;font-style:italic;"> </div>
<div class="a" style="left:920.0px;top:329.67px;font-size:20px;line-height:24.00px;font-family:'Liberation Mono',monospace;color:#000080;font-weight:bold;">${</div>
<div class="a" style="left:944.0px;top:329.67px;font-size:20px;line-height:24.00px;font-family:'Liberation Mono',monospace;color:#0000FF;font-weight:bold;">USER</div>
<div class="a" style="left:992.0px;top:329.67px;font-size:20px;line-height:24.00px;font-family:'Liberation Mono',monospace;color:#000080;font-weight:bold;">}</div>
<div class="a" style="left:920.0px;top:357.0px;width:24.0px;height:31.5px;background:#F4F7FD"></div>
<div class="a" style="left:944.0px;top:357.0px;width:48.0px;height:31.5px;background:#F4F7FD"></div>
<div class="a" style="left:992.0px;top:357.0px;width:12.0px;height:31.5px;background:#F4F7FD"></div>
<div class="a" style="left:1040.0px;top:357.0px;width:24.0px;height:31.5px;background:#F4F7FD"></div>
<div class="a" style="left:1064.0px;top:357.0px;width:48.0px;height:31.5px;background:#F4F7FD"></div>
<div class="a" style="left:1112.0px;top:357.0px;width:12.0px;height:31.5px;background:#F4F7FD"></div>
<div class="a" style="left:800px;top:361.67px;font-size:20px;line-height:24.00px;font-family:'Liberation Mono',monospace;color:#008000;font-style:italic;">* </div>
<div class="a" style="left:824.0px;top:361.67px;font-size:20px;line-height:24.00px;font-family:'Liberation Mono',monospace;color:#008000;font-weight:bold;font-style:italic;text-decoration:underline;text-decoration-color:#7a7a7a;text-decoration-thickness:1px;text-underline-offset:3px;">@Create</div>
<div class="a" style="left:908.0px;top:361.67px;font-size:20px;line-height:24.00px;font-family:'Liberation Mono',monospace;color:#008000;font-style:italic;"> </div>
<div class="a" style="left:920.0px;top:361.67px;font-size:20px;line-height:24.00px;font-family:'Liberation Mono',monospace;color:#000080;font-weight:bold;">${</div>
<div class="a" style="left:944.0px;top:361.67px;font-size:20px;line-height:24.00px;font-family:'Liberation Mono',monospace;color:#0000FF;font-weight:bold;">DATE</div>
<div class="a" style="left:992.0px;top:361.67px;font-size:20px;line-height:24.00px;font-family:'Liberation Mono',monospace;color:#000080;font-weight:bold;">}</div>
<div class="a" style="left:1004.0px;top:361.67px;font-size:20px;line-height:24.00px;font-family:'Liberation Mono',monospace;color:#008000;font-style:italic;"> - </div>
<div class="a" style="left:1040.0px;top:361.67px;font-size:20px;line-height:24.00px;font-family:'Liberation Mono',monospace;color:#000080;font-weight:bold;">${</div>
<div class="a" style="left:1064.0px;top:361.67px;font-size:20px;line-height:24.00px;font-family:'Liberation Mono',monospace;color:#0000FF;font-weight:bold;">TIME</div>
<div class="a" style="left:1112.0px;top:361.67px;font-size:20px;line-height:24.00px;font-family:'Liberation Mono',monospace;color:#000080;font-weight:bold;">}</div>
<div class="a" style="left:800px;top:393.67px;font-size:20px;line-height:24.00px;font-family:'Liberation Mono',monospace;color:#008000;font-style:italic;">* </div>
<div class="a" style="left:824.0px;top:393.67px;font-size:20px;line-height:24.00px;font-family:'Liberation Mono',monospace;color:#008000;font-weight:bold;font-style:italic;text-decoration:underline;text-decoration-color:#7a7a7a;text-decoration-thickness:1px;text-underline-offset:3px;">@Description</div>
<div class="a" style="left:800px;top:424.67px;font-size:20px;line-height:24.00px;font-family:'Liberation Mono',monospace;color:#008000;font-style:italic;">*/</div>
<div class="a" style="left:956.0px;top:451.5px;width:24.0px;height:31.5px;background:#F4F7FD"></div>
<div class="a" style="left:980.0px;top:451.5px;width:48.0px;height:31.5px;background:#F4F7FD"></div>
<div class="a" style="left:1028.0px;top:451.5px;width:12.0px;height:31.5px;background:#F4F7FD"></div>
<div class="a" style="left:800px;top:455.67px;font-size:20px;line-height:24.00px;font-family:'Liberation Mono',monospace;color:#000080;font-weight:bold;">public class </div>
<div class="a" style="left:956.0px;top:455.67px;font-size:20px;line-height:24.00px;font-family:'Liberation Mono',monospace;color:#000080;font-weight:bold;">${</div>
<div class="a" style="left:980.0px;top:455.67px;font-size:20px;line-height:24.00px;font-family:'Liberation Mono',monospace;color:#0000FF;font-weight:bold;">NAME</div>
<div class="a" style="left:1028.0px;top:455.67px;font-size:20px;line-height:24.00px;font-family:'Liberation Mono',monospace;color:#000080;font-weight:bold;">}</div>
<div class="a" style="left:1040.0px;top:455.67px;font-size:20px;line-height:24.00px;font-family:'Liberation Mono',monospace;color:#000;font-weight:bold;"> {</div>
<div class="a" style="left:800px;top:487.67px;font-size:20px;line-height:24.00px;font-family:'Liberation Mono',monospace;color:#000;font-weight:bold;">}</div>
<div class="a" style="left:799px;top:628px;width:20px;height:20px;border:2px solid #333;background:#fff"></div>
<svg class="a" style="left:799px;top:628px" width="20" height="20" viewBox="0 0 20 20"><path d="M3.3 10L7.6 14.3L16.5 4.4" fill="none" stroke="#333" stroke-width="1.8"/></svg>
<div class="a" id="k57" style="left:826px;top:627.05px;font-size:19.6px;line-height:23.52px;;letter-spacing:-0.035px">Reformat according to style</div>
<div class="a" style="left:825px;top:646px;width:12px;height:2px;background:#000"></div>
<div class="a" style="left:1125px;top:628px;width:20px;height:20px;border:2px solid #333;background:#fff"></div>
<div class="a" id="k58" style="left:1151px;top:627.43px;font-size:19.2px;line-height:23.04px;;letter-spacing:-0.171px">Enable Live Templates</div>
<div class="a" style="left:1213px;top:646px;width:8.5px;height:2px;background:#000"></div>
<div class="a" id="k59" style="left:799px;top:676.89px;font-size:16.6px;line-height:19.92px;;letter-spacing:0.216px">Description</div>
<div class="a" style="left:892px;top:685px;width:873px;height:2px;background:#CFCFCF"></div>
<div class="a" style="left:798px;top:709px;width:972px;height:237px;border:2px solid #C4C4C4;background:#fff"></div>
<div class="a" style="left:1753px;top:711px;width:15px;height:65.5px;background:#E0E0E0;border-right:1.6px solid #C8C8C8;border-bottom:1.6px solid #C8C8C8"></div>
<div class="a" id="k60" style="left:812px;top:726.21px;font-size:15.2px;line-height:18.24px;;letter-spacing:0.692px">This is a built-in template used each time you create a new Java class, by selecting <i>New</i> | <i>Java Class</i> | <i>Class</i> from the</div>
<div class="a" id="k61" style="left:812px;top:747.21px;font-size:15.2px;line-height:18.24px;;letter-spacing:0.891px">popup menu in one of the project views.</div>
<div class="a" id="k62" style="left:812px;top:768.21px;font-size:15.2px;line-height:18.24px;;letter-spacing:0.699px">The template is editable. Along with Java expressions and comments, you can also use predefined variables (listed below)</div>
<div class="a" id="k63" style="left:812px;top:789.21px;font-size:15.2px;line-height:18.24px;;letter-spacing:0.736px">that will then be expanded like macros into the corresponding values.</div>
<div class="a" id="k64" style="left:812px;top:810.21px;font-size:15.2px;line-height:18.24px;;letter-spacing:0.945px">It is also possible to specify an arbitrary number of custom variables in the format <b>${&lt;VARIABLE_NAME&gt;}</b>. In this case,</div>
<div class="a" id="k65" style="left:812px;top:831.21px;font-size:15.2px;line-height:18.24px;;letter-spacing:0.726px">before the new file is created, you will be prompted with a dialog where you can define particular values for all custom</div>
<div class="a" id="k66" style="left:812px;top:852.21px;font-size:15.2px;line-height:18.24px;;letter-spacing:0.580px">variables.</div>
<div class="a" id="k67" style="left:812px;top:873.21px;font-size:15.2px;line-height:18.24px;;letter-spacing:0.763px">Using the <b>#parse</b> directive, you can include templates from the <i>Includes</i> tab, by specifying the full name of the desired</div>
<div class="a" id="k68" style="left:812px;top:894.21px;font-size:15.2px;line-height:18.24px;;letter-spacing:0.900px">template as a parameter in quotation marks. For example:</div>
<div class="a" id="k69" style="left:812px;top:915.21px;font-size:15.2px;line-height:18.24px;;letter-spacing:1.469px"><b>#parse("File Header.java")</b></div>
<div class="a" style="left:1417.5px;top:976px;width:108px;height:33px;background:#E1E1E1;border:2px solid #0078D7"></div>
<div class="a" id="k70" style="left:1460px;top:981.33px;font-size:19.3px;line-height:23.16px;;letter-spacing:-1.890px">OK</div>
<div class="a" style="left:1537.5px;top:976px;width:108px;height:33px;background:#E1E1E1;border:1px solid #ADADAD"></div>
<div class="a" id="k71" style="left:1563px;top:981.33px;font-size:19.3px;line-height:23.16px;;letter-spacing:-0.666px">Cancel</div>
<div class="a" style="left:1657.5px;top:976px;width:108px;height:33px;background:#E8E8E8;border:1px solid #D0D0D0"></div>
<div class="a" id="k72" style="left:1687px;top:981.33px;font-size:19.3px;line-height:23.16px;color:#A6A6A6;letter-spacing:0.495px">Apply</div>
<div class="a" style="left:18px;top:975px;width:36px;height:36px;background:#F2F2F2"></div>
<svg class="a" style="left:19px;top:982px" width="26" height="26" viewBox="0 0 26 26"><circle cx="13" cy="12.8" r="12" fill="#0A74DA"/><path d="M10 8.3C10.5 6.5 11.8 5.6 13.4 5.6C15.4 5.6 16.6 6.9 16.6 8.6C16.6 11 13.5 12.2 13.4 14.8V16.3" fill="none" stroke="#fff" stroke-width="1.5"/><circle cx="13.3" cy="19.6" r="1.1" fill="#fff"/></svg>
<svg class="a" style="left:0;top:0" width="1784" height="1022">
<rect x="795.2" y="300.2" width="366.6" height="150.6" fill="none" stroke="#ED1C24" stroke-width="4.4" stroke-linejoin="round"/>
<polygon points="192.53,406.92 357.34,223.99 361.03,231.17 370.90,200.00 341.41,214.12 349.04,216.77 190.87,405.48" fill="#ED1C24"/><circle cx="191.7" cy="406.2" r="1.1" fill="#ED1C24"/>
<polygon points="421.90,210.15 478.52,346.93 470.45,347.26 494.60,369.30 494.16,336.61 488.55,342.42 423.90,209.25" fill="#ED1C24"/><circle cx="422.9" cy="209.7" r="1.1" fill="#ED1C24"/>
<polygon points="576.92,365.99 763.54,350.35 761.36,358.13 789.80,342.00 758.58,332.28 762.37,339.42 576.68,363.81" fill="#ED1C24"/><circle cx="576.8" cy="364.9" r="1.1" fill="#ED1C24"/>
</svg>
</body></html>
